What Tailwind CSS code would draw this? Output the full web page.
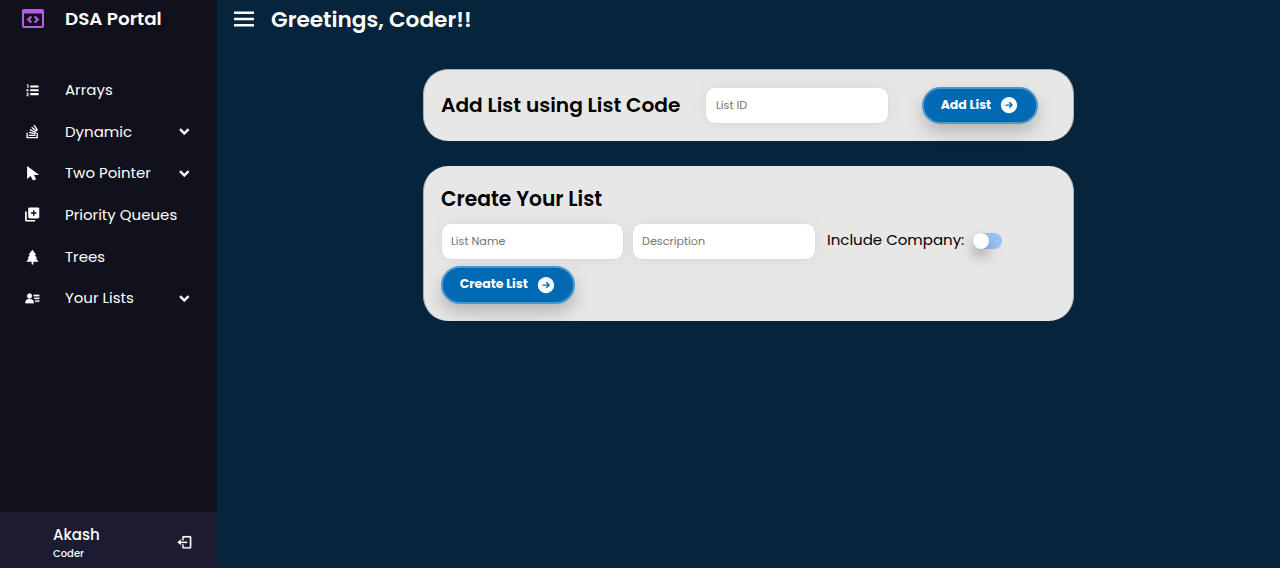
<!DOCTYPE html>
<html lang="en">
<head>
<meta charset="utf-8">
<title>DSA Portal</title>
<script src="https://cdn.jsdelivr.net/npm/@tailwindcss/browser@4"></script>
</head>
<body class="flex h-[568px] w-[1280px] overflow-hidden bg-[#07243d] font-['Poppins','Inter',sans-serif] text-white">
<aside class="flex w-[217px] shrink-0 flex-col bg-[#11101d]">
  <div class="flex h-[38px] items-center">
    <span class="flex w-[65px] justify-center"><svg class="h-5 w-[22px]" viewBox="0 0 22 20" fill="none" stroke="#b85ce6" stroke-width="2"><rect x="1" y="1" width="20" height="17" rx="1"/><path d="M1 2.500h20" stroke-width="4"/><path d="m9.300 7.500-3 3 3 3m3.400-6 3 3-3 3" stroke-width="2.200"/></svg></span>
    <span class="text-[18.330px] font-semibold">DSA Portal</span>
  </div>
  <nav class="mt-[31.500px] flex flex-col text-[15px]">
    <a class="flex h-[41.670px] items-center">
      <span class="flex w-[65px] justify-center"><svg class="mb-[1px] size-[16.670px]" viewBox="0 0 24 24" fill="white"><path d="M9 5h12v3H9zM9 10.500h12v3H9zM9 16h12v3H9zM4 3.500h2.500v5H5V5H4zM3.500 10.500h3v3h-3zM3.500 15.500h3v5h-3v-1.500H5v-2H3.500z"/></svg></span>Arrays</a>
    <a class="flex h-[41.670px] items-center">
      <span class="flex w-[65px] justify-center"><svg class="mb-[1px] size-[16.670px]" viewBox="0 0 24 24" fill="none" stroke="white" stroke-width="2"><path d="M4.500 14v7h14.500v-7M7 17.800h9.500M7.300 13.600l9.300 2M8.600 9.600l8.600 4.100M11 6l7.200 6M14.500 3l5 7.500"/></svg></span>
      <span class="flex-1">Dynamic</span>
      <span class="flex w-[65px] justify-center"><svg class="mb-[1px] size-[16.670px]" viewBox="0 0 24 24" fill="white" stroke="white" stroke-width=".6"><path d="M16.939 7.939 12 12.879l-4.939-4.940-2.122 2.122L12 17.121l7.061-7.060z"/></svg></span></a>
    <a class="flex h-[41.670px] items-center">
      <span class="flex w-[65px] justify-center"><svg class="size-[16.670px]" viewBox="0 0 24 24" fill="white"><path d="M4.500 1.500v18.500l5-4 3.500 6.500 4.500-2-3.200-6H22z"/></svg></span>
      <span class="flex-1">Two Pointer</span>
      <span class="flex w-[65px] justify-center"><svg class="size-[16.670px]" viewBox="0 0 24 24" fill="white" stroke="white" stroke-width=".6"><path d="M16.939 7.939 12 12.879l-4.939-4.940-2.122 2.122L12 17.121l7.061-7.060z"/></svg></span></a>
    <a class="flex h-[41.670px] items-center">
      <span class="flex w-[65px] justify-center"><svg class="mb-[1px] size-[16.670px]" viewBox="0 0 24 24" fill="white"><path d="M20 2H8c-1.103 0-2 .897-2 2v12c0 1.103.897 2 2 2h12c1.103 0 2-.897 2-2V4c0-1.103-.897-2-2-2zm-2 9h-3v3h-2v-3h-3V9h3V6h2v3h3v2z"/><path d="M4 8H1.500v12c0 1.103.897 2.500 2.500 2.500h12V20H4V8z"/></svg></span>Priority Queues</a>
    <a class="flex h-[41.670px] items-center">
      <span class="flex w-[65px] justify-center"><svg class="size-[16.670px]" viewBox="0 0 24 24" fill="white"><path d="M12 1 6.500 8.500H8.500L5 13.500h2L3.500 18.500H11V22.500h2.500v-4H21l-4-5h2.200l-4-5h2.500z"/></svg></span>Trees</a>
    <a class="flex h-[41.670px] items-center">
      <span class="flex w-[65px] justify-center"><svg class="size-[16.670px]" viewBox="0 0 24 24" fill="white" stroke="white" stroke-width=".4"><path d="M15 11h7v2h-7zm1 4h6v2h-6zm-2-8h8v2h-8zM4 19h10v-1c0-2.757-2.243-5-5-5H7c-2.757 0-5 2.243-5 5v1h2zm4-7c1.995 0 3.500-1.505 3.500-3.500S9.995 5 8 5 4.500 6.505 4.500 8.500 6.005 12 8 12z"/></svg></span>
      <span class="flex-1">Your Lists</span>
      <span class="flex w-[65px] justify-center"><svg class="size-[16.670px]" viewBox="0 0 24 24" fill="white" stroke="white" stroke-width=".6"><path d="M16.939 7.939 12 12.879l-4.939-4.940-2.122 2.122L12 17.121l7.061-7.060z"/></svg></span></a>
  </nav>
  <div class="mt-auto flex h-14 items-center bg-[#1d1b31] pt-[5px] pl-[53px]">
    <div class="flex-1 font-medium"><div class="text-[15px] leading-[22px]">Akash</div><div class="text-[10px] leading-[15px]">Coder</div></div>
    <span class="flex w-[65px] justify-center"><svg class="size-[16.670px]" viewBox="0 0 24 24" fill="white" stroke="white" stroke-width=".3"><path d="m2 12 5 4v-3h9v-2H7V8z"/><path d="M20 3h-9c-1.103 0-2 .897-2 2v4h2V5h9v14h-9v-4H9v4c0 1.103.897 2 2 2h9c1.103 0 2-.897 2-2V5c0-1.103-.897-2-2-2z"/></svg></span>
  </div>
</aside>
<main class="flex-1">
  <header class="flex h-[38px] items-center pl-3">
    <svg class="size-[30px]" viewBox="0 0 24 24" fill="white"><path d="M4 6h16v2H4zm0 5h16v2H4zm0 5h16v2H4z"/></svg>
    <h1 class="ml-3 pt-[2px] text-[21.670px] font-semibold">Greetings, Coder!!</h1>
  </header>
  <section class="mt-[31px] ml-[206px] flex h-[72px] w-[651px] items-center rounded-[25px] border-x border-t border-[#a9b1b8] bg-[#e7e7e7] pl-[17px]">
    <h2 class="w-[264px] text-[20.150px] font-semibold text-black">Add List using List Code</h2>
    <input class="h-[37px] w-[184px] rounded-[10px] border border-[#dcdcdc] bg-white px-[10px] text-[11.200px] shadow-[0_0_17px_rgba(0,0,0,0.05)] placeholder:text-[#757575]" placeholder="List ID">
    <button class="ml-[33px] flex h-[37.500px] items-center gap-[8px] rounded-full border-[2.500px] border-[#4a97cc] bg-[#0069b4] px-[16.670px] text-[12.500px] font-bold shadow-[0_8px_17px_rgba(0,0,0,0.22)]">Add List
      <svg class="mb-[1px] size-5" viewBox="0 0 24 24" fill="white"><path fill-rule="evenodd" d="M12 2.250c-5.385 0-9.750 4.365-9.750 9.750s4.365 9.750 9.750 9.750 9.750-4.365 9.750-9.750S17.385 2.250 12 2.250zm4.280 10.280a.75.75 0 000-1.060l-3-3a.75.75 0 10-1.060 1.060l1.720 1.720H8.250a.75.75 0 000 1.500h5.690l-1.720 1.720a.75.75 0 101.060 1.060l3-3z"/></svg></button>
  </section>
  <section class="mt-[25px] ml-[206px] flex h-[155px] w-[651px] flex-col items-start rounded-[25px] border-x border-[#a9b1b8] bg-[#e7e7e7] pt-[17px] pl-[17px]">
    <h2 class="h-[40px] text-[20.250px] leading-[32px] font-semibold text-black">Create Your List</h2>
    <div class="flex h-[37px] items-start">
      <input class="h-[37px] w-[183px] rounded-[10px] border border-[#dcdcdc] bg-white px-[9px] text-[11.200px] shadow-[0_0_17px_rgba(0,0,0,0.05)] placeholder:text-[#757575]" placeholder="List Name">
      <input class="ml-2 h-[37px] w-[184px] rounded-[10px] border border-[#dcdcdc] bg-white px-[9px] text-[11.200px] shadow-[0_0_17px_rgba(0,0,0,0.05)] placeholder:text-[#757575]" placeholder="Description">
      <span class="mt-[7px] ml-[11px] text-[15px] leading-[20px] text-black">Include Company:</span>
      <span class="mt-[9.500px] ml-[8.500px] flex h-[16.670px] w-[29px] rounded-full bg-[#98c5f4]"><span class="size-[16.670px] rounded-full bg-white shadow-[0_7px_14px_rgba(0,0,0,0.35)]"></span></span>
    </div>
    <button class="mt-[6px] flex h-[37.500px] items-center gap-[8px] rounded-full border-[2.500px] border-[#4a97cc] bg-[#0069b4] px-[16.670px] text-[12.500px] font-bold shadow-[0_8px_17px_rgba(0,0,0,0.22)]">Create List
      <svg class="size-5" viewBox="0 0 24 24" fill="white"><path fill-rule="evenodd" d="M12 2.250c-5.385 0-9.750 4.365-9.750 9.750s4.365 9.750 9.750 9.750 9.750-4.365 9.750-9.750S17.385 2.250 12 2.250zm4.280 10.280a.75.75 0 000-1.060l-3-3a.75.75 0 10-1.060 1.060l1.720 1.720H8.250a.75.75 0 000 1.500h5.690l-1.720 1.720a.75.75 0 101.060 1.060l3-3z"/></svg></button>
  </section>
</main>
</body>
</html>
